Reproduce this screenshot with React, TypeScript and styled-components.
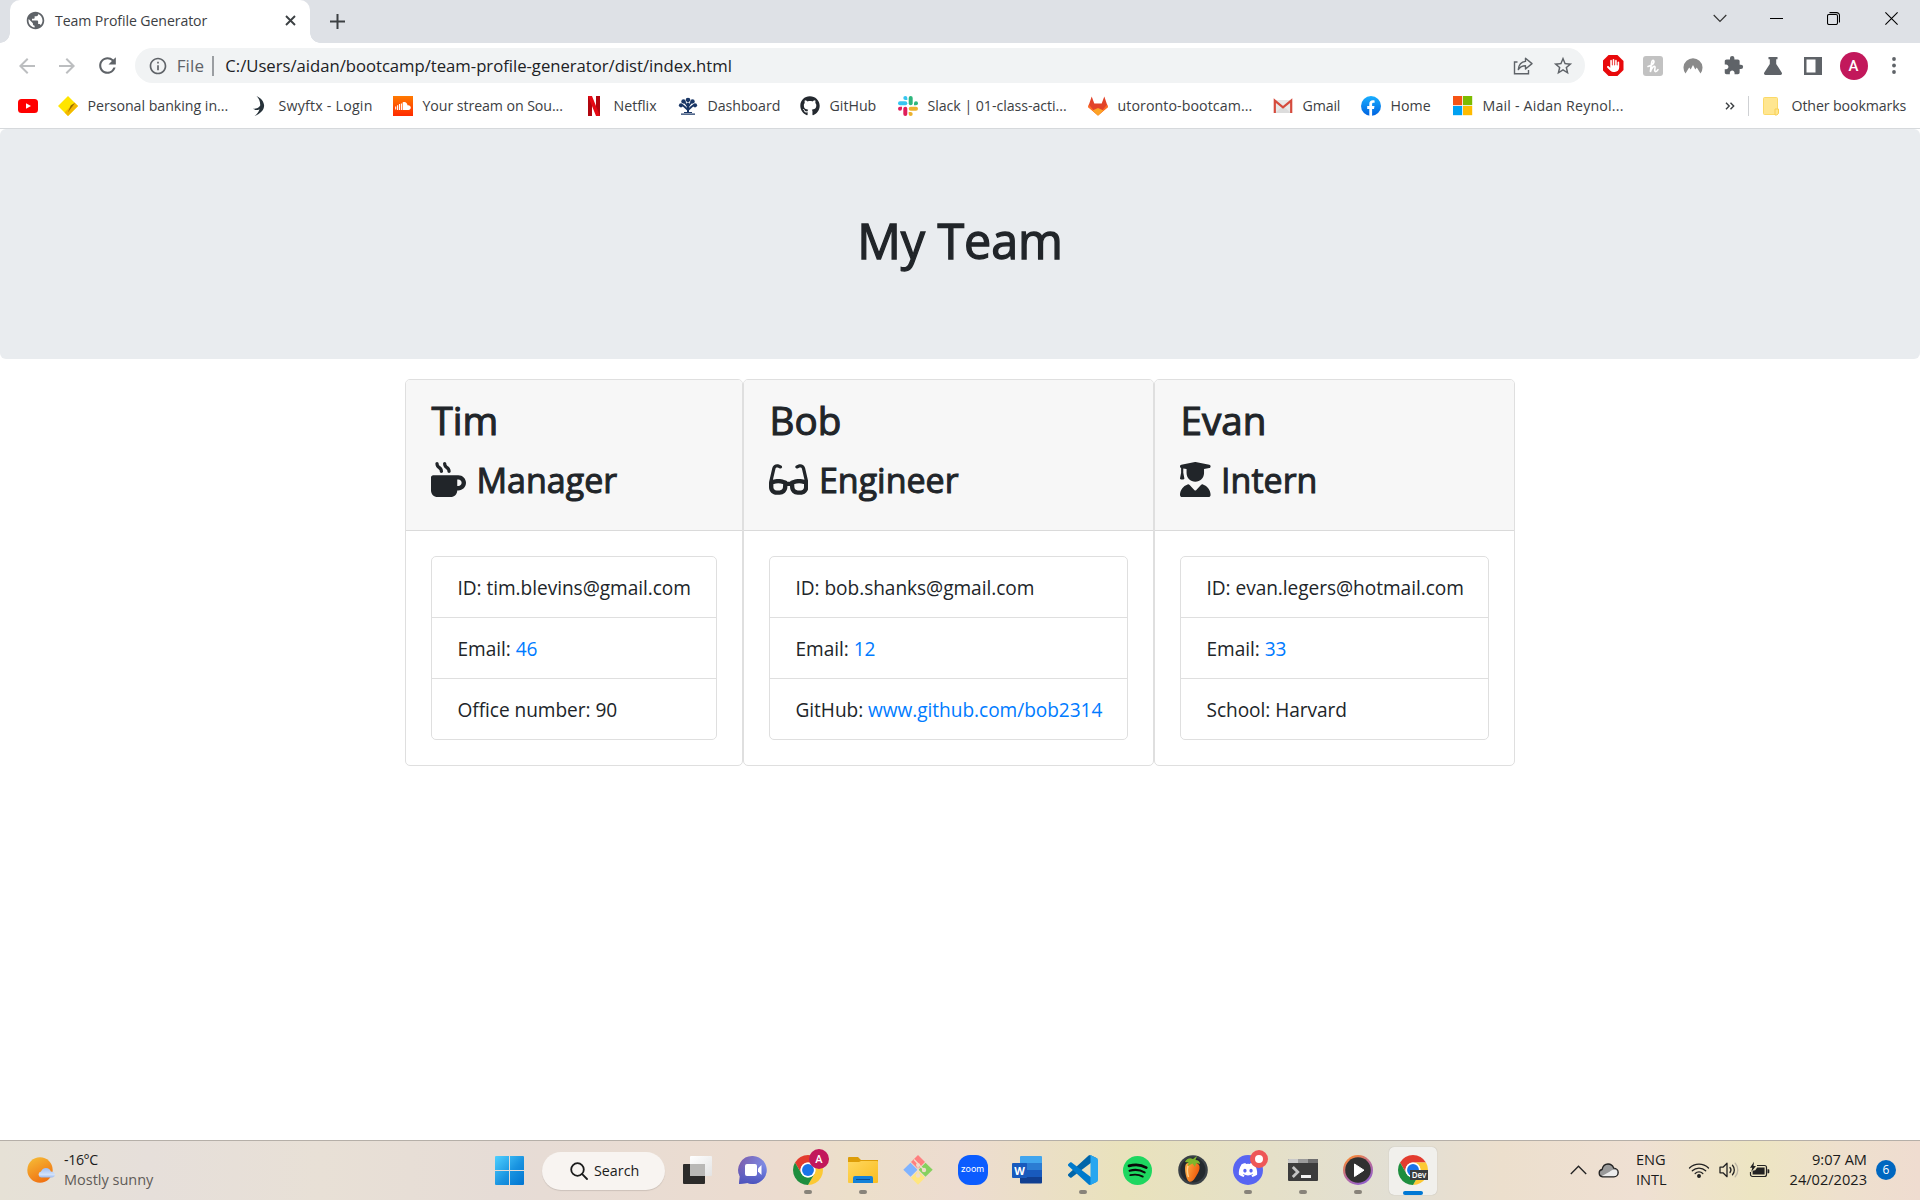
import React from "react";
import styled, { createGlobalStyle } from "styled-components";
import { MdPublic, MdArrowBack, MdArrowForward, MdRefresh, MdInfoOutline, MdStarBorder, MdExtension } from "react-icons/md";
import { FaMugHot, FaGlasses, FaUserGraduate, FaGithub, FaDiscord, FaHand } from "react-icons/fa6";

const FONT = `"Open Sans", "Noto Sans", sans-serif`;
const UI_INK = "#3c4043";

const GlobalStyle = createGlobalStyle`
  * { box-sizing: border-box; }
  body { margin: 0; background: #fff; font-family: ${FONT}; font-weight: 400; overflow: hidden; }
  h1, h2, h3, ul { margin: 0; padding: 0; }
  svg { display: block; flex: none; }
`;

const Screen = styled.div`
  width: 1920px;
  height: 1200px;
  display: flex;
  flex-direction: column;
`;

/* ---------- Shared ---------- */

const Label = styled.span<{ $size?: number; $track?: number; $color?: string }>`
  font-size: ${(p) => p.$size ?? 14.2}px;
  letter-spacing: ${(p) => p.$track ?? 0}px;
  color: ${(p) => p.$color ?? UI_INK};
  white-space: pre;
  line-height: 20px;
`;

const IconCell = styled.span<{ $w: number; $color?: string }>`
  width: ${(p) => p.$w}px;
  flex: none;
  display: flex;
  align-items: center;
  justify-content: center;
  color: ${(p) => p.$color ?? "#5f6368"};
`;

/* ---------- Tab strip ---------- */

const TabStrip = styled.header`
  height: 43px;
  flex: none;
  display: flex;
  background: #dee1e6;
  padding-left: 10px;
`;

const Tab = styled.div`
  position: relative;
  width: 300px;
  height: 43px;
  display: flex;
  align-items: center;
  padding: 0 12px 2px 15px;
  background: #fff;
  border-radius: 10px 10px 0 0;
  &::before,
  &::after {
    content: "";
    position: absolute;
    bottom: 0;
    width: 10px;
    height: 10px;
  }
  &::before {
    left: -10px;
    background: radial-gradient(circle at 0 0, #dee1e6 9.5px, #fff 10px);
  }
  &::after {
    right: -10px;
    background: radial-gradient(circle at 100% 0, #dee1e6 9.5px, #fff 10px);
  }
`;

const TabTitle = styled(Label)`
  flex: 1;
  padding-left: 10px;
`;

const NewTab = styled.div`
  width: 36px;
  margin-left: 9px;
  height: 43px;
  display: flex;
  align-items: center;
  justify-content: center;
`;

const WindowControls = styled.div`
  margin-left: auto;
  height: 37px;
  display: flex;
`;

/* ---------- Toolbar ---------- */

const Toolbar = styled.div`
  height: 45px;
  flex: none;
  display: flex;
  align-items: center;
  padding: 0 7px;
`;

const Omnibox = styled.div`
  width: 1450px;
  height: 35px;
  margin-left: 8px;
  display: flex;
  align-items: center;
  border-radius: 18px;
  background: #f1f3f4;
  padding: 0 3px 0 8px;
`;

const SchemeDivider = styled.span`
  width: 2px;
  height: 20px;
  margin: 0 11px 0 8px;
  background: #9b9ea2;
`;

const OmniboxActions = styled.div`
  margin-left: auto;
  display: flex;
`;

const Extensions = styled.div`
  display: flex;
  align-items: center;
  margin-left: 8px;
`;

const Blocker = styled.span`
  width: 21px;
  height: 21px;
  display: grid;
  place-items: center;
  background: #e8090b;
  color: #fff;
  clip-path: polygon(29% 0, 71% 0, 100% 29%, 100% 71%, 71% 100%, 29% 100%, 0 71%, 0 29%);
`;

const Honey = styled.span`
  width: 20px;
  height: 20px;
  border-radius: 3px;
  background: #c2c2c2;
  display: grid;
  place-items: center;
`;

const Avatar = styled.span<{ $d: number; $f: number }>`
  width: ${(p) => p.$d}px;
  height: ${(p) => p.$d}px;
  border-radius: 50%;
  background: #c2185b;
  color: #fff;
  display: grid;
  place-items: center;
  font: 500 ${(p) => p.$f}px Roboto, sans-serif;
`;

/* ---------- Bookmarks ---------- */

const BookmarkBar = styled.nav`
  height: 41px;
  flex: none;
  display: flex;
  align-items: center;
  padding: 0 0 4px 18px;
  border-bottom: 1px solid #d6d9dc;
`;

const BookmarkItem = styled.div<{ $w: number }>`
  width: ${(p) => p.$w}px;
  flex: none;
  display: flex;
  align-items: center;
  gap: 9.5px;
`;

const OtherBookmarks = styled.div`
  margin-left: auto;
  width: 195px;
  display: flex;
  align-items: center;
`;

const OtherLabel = styled(Label)`
  margin-left: 10.5px;
`;

const BarDivider = styled.span`
  width: 1px;
  height: 20px;
  margin: 0 12px 0 13px;
  background: #cfd1d4;
`;

/* ---------- Page ---------- */

const Page = styled.main`
  flex: 1;
  display: flex;
  flex-direction: column;
  align-items: center;
  color: #212529;
`;

const Jumbotron = styled.section`
  width: 100%;
  height: 230px;
  padding-top: 81px;
  background: #e9ecef;
  border-radius: 6px;
  text-align: center;
`;

const PageTitle = styled.h1`
  font-size: 48.5px;
  font-weight: 400;
  line-height: 60px;
  letter-spacing: -0.1px;
  -webkit-text-stroke: 1.3px currentColor;
`;

const Team = styled.section`
  display: flex;
  margin-top: 20px;
`;

const Card = styled.article<{ $w: number }>`
  width: ${(p) => p.$w}px;
  height: 387px;
  border: 1px solid #dfdfdf;
  border-radius: 5px;
  overflow: hidden;
`;

const CardHeader = styled.div`
  height: 151px;
  padding: 16px 25px 14px;
  background: #f7f7f7;
  border-bottom: 1px solid #dadada;
`;

const MemberName = styled.h2`
  font-size: 38.6px;
  font-weight: 400;
  line-height: 48px;
  margin-bottom: 10px;
  padding-left: 0.5px;
  -webkit-text-stroke: 1.1px currentColor;
`;

const MemberRole = styled.h3`
  display: flex;
  align-items: center;
  gap: 10.5px;
  height: 52px;
  font-size: 34px;
  font-weight: 400;
  line-height: 42px;
`;

const RoleName = styled.span`
  -webkit-text-stroke: 1px currentColor;
`;

const RoleIcon = styled.span<{ $w: number }>`
  width: ${(p) => p.$w}px;
  padding-bottom: 1px;
  svg {
    width: ${(p) => p.$w}px;
    height: 35px;
  }
`;

const CardBody = styled.div`
  padding: 25px;
`;

const DetailList = styled.ul`
  list-style: none;
  border: 1px solid #dfdfdf;
  border-radius: 5px;
`;

const Detail = styled.li`
  height: 61px;
  padding: 16px 0 0 25.5px;
  font-size: 19.1px;
  letter-spacing: -0.05px;
  line-height: 30px;
  white-space: nowrap;
  &:not(:last-child) {
    border-bottom: 1px solid #dfdfdf;
  }
  &:last-child {
    height: 60px;
  }
`;

const Link = styled.a`
  color: #007bff;
`;

/* ---------- Taskbar ---------- */

const Taskbar = styled.footer`
  height: 60px;
  flex: none;
  display: flex;
  align-items: center;
  border-top: 1px solid #b5afa8;
  background: linear-gradient(
    90deg,
    #e6e1d6 0, #e6dfda 150px, #e8e0d6 320px, #e6dcd6 500px, #ecdccf 780px, #ecdfca 850px,
    #eddcd0 960px, #e9e2bc 1125px, #e5e0c8 1270px, #e2dfd4 1400px, #ecdfcd 1500px,
    #efe0d3 1640px, #ede5c2 1755px, #eee0cd 1840px, #efdcd0 1920px
  );
`;

const Weather = styled.div`
  width: 482px;
  padding-left: 26px;
  display: flex;
  align-items: center;
  gap: 9px;
`;

const Stack = styled.div<{ $align?: string }>`
  display: flex;
  flex-direction: column;
  align-items: ${(p) => p.$align ?? "flex-start"};
  padding-bottom: 2px;
`;

const Slot = styled.div`
  position: relative;
  width: 55px;
  height: 59px;
  display: grid;
  place-items: center;
  padding-bottom: 1px;
`;

const ActiveSlot = styled(Slot)`
  width: 48px;
  height: 48px;
  margin-left: 4px;
  border-radius: 5px;
  background: #f1f0ec;
  box-shadow: 0 0 1px rgba(0, 0, 0, 0.25);
`;

const Indicator = styled.span<{ $active?: boolean }>`
  position: absolute;
  bottom: ${(p) => (p.$active ? 0 : 6)}px;
  width: ${(p) => (p.$active ? 20 : 8)}px;
  height: 4px;
  border-radius: 2px;
  background: ${(p) => (p.$active ? "#0078d4" : "#88837a")};
`;

const SearchPill = styled.div`
  width: 123px;
  height: 38px;
  margin: 0 5px;
  border-radius: 19px;
  background: #f8f4f1;
  box-shadow: 0 1px 1px rgba(0, 0, 0, 0.12);
  display: flex;
  align-items: center;
  gap: 6px;
  padding-left: 28px;
`;

const CornerBadge = styled.span<{ $top: number; $right: number }>`
  position: absolute;
  top: ${(p) => p.$top}px;
  right: ${(p) => p.$right}px;
`;

const ZoomBadge = styled.span`
  width: 30px;
  height: 30px;
  border-radius: 12px;
  background: #0b5cff;
  color: #fff;
  display: grid;
  place-items: center;
  padding-bottom: 3px;
  font: 400 9px Inter, sans-serif;
`;

const DevBadge = styled.span`
  position: absolute;
  left: 21px;
  top: 23px;
  width: 18px;
  height: 10px;
  background: #3a3c3e;
  color: #fff;
  font: 600 8px/10px "Open Sans", sans-serif;
  text-align: center;
`;

const WordMark = styled.span`
  position: absolute;
  left: 12px;
  top: 22px;
  width: 15px;
  height: 15px;
  border-radius: 1px;
  background: #185abd;
  color: #fff;
  font: 700 11px/15px "Open Sans", sans-serif;
  text-align: center;
`;

const DiscordDisc = styled.span`
  width: 30px;
  height: 30px;
  border-radius: 50%;
  background: #5865f2;
  color: #fff;
  display: grid;
  place-items: center;
`;

const Recording = styled.span`
  display: block;
  width: 18px;
  height: 18px;
  border-radius: 50%;
  border: 5px solid #ee5757;
  background: #fff;
`;

const Tray = styled.div`
  margin-left: auto;
  display: flex;
  align-items: center;
  padding: 0 24px 1px 0;
`;

const Language = styled(Stack)`
  width: 51px;
  padding-left: 1px;
`;

const Clock = styled(Stack)`
  width: 86px;
`;

const Count = styled.span`
  width: 20px;
  height: 20px;
  margin-left: 9px;
  border-radius: 50%;
  background: #0067c0;
  color: #fff;
  display: grid;
  place-items: center;
  font: 400 12px/20px ${FONT};
`;

/* ---------- Drawings ---------- */

const YouTube = () => (
  <svg width="20" height="20" viewBox="0 0 20 20">
    <rect y="3" width="20" height="14" rx="3.5" fill="#f00" />
    <path d="M8 7.2v5.6l5-2.8z" fill="#fff" />
  </svg>
);
const Bank = () => (
  <svg width="20" height="20" viewBox="0 0 20 20">
    <path d="M10 0 20 10 10 20 0 10z" fill="#ffe500" />
    <path d="M16.4 6.4 20 10 10 20 6.6 16.6z" fill="#f2b800" />
    <path d="M17 7 9.8 16.6l3-7.4z" fill="#7a5500" opacity=".75" />
  </svg>
);
const Swyftx = () => (
  <svg width="20" height="20" viewBox="0 0 20 20">
    <path d="M7.5 0c5 2.2 7.5 6 7.6 9.6C15.200 14 11 18 5.500 20c2.800-2.200 4.300-4.300 5-6.800-2.300 1.300-4.300 1.100-6.500-.4 3.300.2 5.600-.9 7.200-3.300C11.400 5.500 9.800 2.200 7.500 0z" fill="#27323a" />
  </svg>
);
const SoundCloud = () => (
  <svg width="20" height="20" viewBox="0 0 20 20">
    <defs>
      <linearGradient id="sc" x1="0" x2="0" y1="0" y2="1">
        <stop offset="0" stopColor="#ff7a00" />
        <stop offset="1" stopColor="#ff2a00" />
      </linearGradient>
    </defs>
    <rect width="20" height="20" fill="url(#sc)" />
    <path d="M2.700 10.500v3M4.600 9.200v4.700M6.500 8v6M8.400 7.500v6.500" stroke="#fff" strokeWidth="1.100" />
    <path d="M9.600 6.500c2.600-1.200 4.700.4 4.900 2.800 1.700-.5 3.300.7 3.300 2.300 0 1.300-1 2.400-2.300 2.400H9.600z" fill="#fff" />
  </svg>
);
const Netflix = () => (
  <svg width="20" height="20" viewBox="0 0 20 20">
    <path d="M4 0h4v20H4zM12 0h4v20h-4z" fill="#b1060f" />
    <path d="M4 0h4l8 20h-4z" fill="#e50914" />
  </svg>
);
const UniversityTree = () => (
  <svg width="20" height="20" viewBox="0 0 20 20">
    <g fill="#1a3766">
      <circle cx="10" cy="4.200" r="2.400" />
      <circle cx="5.500" cy="5.500" r="2.200" />
      <circle cx="14.500" cy="5.500" r="2.200" />
      <circle cx="3" cy="9.300" r="2.100" />
      <circle cx="17" cy="9.300" r="2.100" />
      <path d="M9 6h2v11H9zM3 17.500h14v1.300H3zM6 16h8v1H6z" />
    </g>
    <path d="M4 8.500l5.500 5M16 8.500l-5.500 5M6.500 6l3.500 5 3.500-5" stroke="#1a3766" strokeWidth="1.800" fill="none" />
    <path d="M7.500 4.500 10 7l2.500-2.500M4 7.300l4 2.400M16 7.300l-4 2.400" stroke="#fff" strokeWidth=".6" fill="none" />
  </svg>
);
const Slack = () => (
  <svg width="20" height="20" viewBox="0 0 20 20">
    <g fill="#36c5f0"><rect x="0" y="5.300" width="9.300" height="4" rx="2" /><path d="M7.300 0a2 2 0 0 1 2 2v2h-2a2 2 0 0 1 0-4z" /></g>
    <g fill="#2eb67d"><rect x="10.700" y="0" width="4" height="9.300" rx="2" /><path d="M20 7.300a2 2 0 0 1-2 2h-2v-2a2 2 0 0 1 4 0z" /></g>
    <g fill="#ecb22e"><rect x="10.700" y="10.700" width="9.300" height="4" rx="2" /><path d="M12.700 20a2 2 0 0 1-2-2v-2h2a2 2 0 0 1 0 4z" /></g>
    <g fill="#e01e5a"><rect x="5.300" y="10.700" width="4" height="9.300" rx="2" /><path d="M0 12.700a2 2 0 0 1 2-2h2v2a2 2 0 0 1-4 0z" /></g>
  </svg>
);
const GitLab = () => (
  <svg width="20" height="20" viewBox="0 0 20 20">
    <path d="M3.700.5 6.300 7.500h7.400L16.300.5l3.500 10.300L10 19.500.2 10.800z" fill="#e24329" />
    <path d="M.8 8.500 10 19.500l9.200-11 .8 2.800L10 19.500 0 11.300z" fill="#fc6d26" />
    <path d="M4.500 14.500 10 12l5.500 2.500L10 19.800z" fill="#fca326" />
  </svg>
);
const Gmail = () => (
  <svg width="20" height="20" viewBox="0 0 20 20">
    <path d="M1.500 4h17v13h-17z" fill="#e9e9e9" />
    <path d="M2 17l8-7 8 7z" fill="#dcdcdc" />
    <path d="M1.800 17V4.600L10 11.300l8.200-6.700V17" fill="none" stroke="#d54b3d" strokeWidth="2.200" />
  </svg>
);
const Facebook = () => (
  <svg width="20" height="20" viewBox="0 0 20 20">
    <defs>
      <linearGradient id="fb" x1="0" x2="0" y1="0" y2="1">
        <stop offset="0" stopColor="#19afff" />
        <stop offset="1" stopColor="#0062e0" />
      </linearGradient>
    </defs>
    <circle cx="10" cy="10" r="10" fill="url(#fb)" />
    <path d="M8.300 19.900v-7H6.200V10h2.100V7.900c0-2.300 1.400-3.600 3.400-3.600.9 0 1.900.2 1.900.2v2.300h-1.100c-1.100 0-1.400.6-1.400 1.300V10h2.400l-.5 2.900h-1.900v7z" fill="#fff" />
  </svg>
);
const Microsoft = () => (
  <svg width="20" height="20" viewBox="0 0 20 20">
    <path d="M0 0h9.200v9.200H0z" fill="#f65314" />
    <path d="M10 0h9.200v9.200H10z" fill="#7cbb00" />
    <path d="M0 10h9.200v9.200H0z" fill="#00a1f1" />
    <path d="M10 10h9.200v9.200H10z" fill="#ffbb00" />
  </svg>
);
const Folder = () => (
  <svg width="18" height="20" viewBox="0 0 18 20">
    <path d="M2.500 1.500h12a1 1 0 0 1 1 1v16h-13a1 1 0 0 1-1-1v-15a1 1 0 0 1 1-1z" fill="#ffe690" stroke="#fbd968" />
    <path d="M13 13h3.500v4.500l-2 1.500H13z" fill="#ffe690" stroke="#f7cf55" />
  </svg>
);
const Share = () => (
  <svg width="20" height="20" viewBox="0 0 20 20" fill="none" stroke="#5f6368" strokeWidth="1.400">
    <path d="M4.500 6H1.500v11.800h14V14" />
    <path d="M12.500 2.200 19 7.600l-6.500 5.400V9.800C9 9.800 7 11 5.300 13.600 5.700 9.300 8.200 5.900 12.500 5.400z" strokeLinejoin="round" />
  </svg>
);
const NordMark = () => (
  <svg width="20" height="20" viewBox="0 0 20 20">
    <path d="M2.500 17.500A9.500 9.500 0 1 1 17.500 17.500l-3.700-6-1.500 2L10 9l-2.300 4.500-1.500-2z" fill="#8a8a8a" />
  </svg>
);
const Flask = () => (
  <svg width="18" height="18" viewBox="0 0 18 18">
    <path d="M4.500 0h9v2.200h-1.300V7l5.500 8.500c.7 1.200.1 2.500-1.200 2.500h-15C.2 18-.4 16.700.3 15.500L5.800 7V2.200H4.500z" fill="#5f6368" />
  </svg>
);
const SidePanel = () => (
  <svg width="18" height="18" viewBox="0 0 18 18">
    <path d="M0 0h18v18H0zM2.500 2.500v13h9v-13z" fill="#5f6368" fillRule="evenodd" />
  </svg>
);
const Dots = () => (
  <svg width="4" height="17" viewBox="0 0 4 17" fill="#5f6368">
    <circle cx="2" cy="2" r="1.900" /><circle cx="2" cy="8.500" r="1.900" /><circle cx="2" cy="15" r="1.900" />
  </svg>
);
const HoneyMark = () => (
  <svg width="14" height="16" viewBox="0 0 14 16" fill="none" stroke="#fff" strokeWidth="1.600" strokeLinecap="round">
    <path d="M2 8.500C6.500 7.500 9 4.500 7.500 2.500 5.500 1.200 5.300 7 4.300 14 5.500 9.500 8.500 7 9 9c.3 1.500-1.200 4.500.5 4.600 1.300 0 2-1.100 2.500-2" />
  </svg>
);

const SunCloud = () => (
  <svg width="29" height="28" viewBox="0 0 29 28">
    <defs>
      <linearGradient id="sun" x1=".2" x2=".7" y1="0" y2="1">
        <stop offset="0" stopColor="#f5b935" /><stop offset="1" stopColor="#f06e10" />
      </linearGradient>
      <linearGradient id="cl" x1="0" x2="0" y1="0" y2="1">
        <stop offset="0" stopColor="#9fbdf3" /><stop offset=".7" stopColor="#d3e2fa" /><stop offset="1" stopColor="#9ab8ee" />
      </linearGradient>
    </defs>
    <circle cx="14" cy="13" r="12.700" fill="url(#sun)" />
    <path d="M15 20.500a3 3 0 0 1 0-5.900c.8-2.300 2.500-3.700 5-3.700 2.600 0 4.200 1.500 4.800 3.500 2.500.2 4.200 1.300 4.200 3.100 0 1.900-1.500 3-3.400 3z" fill="url(#cl)" />
  </svg>
);
const WindowsLogo = () => (
  <svg width="29" height="29" viewBox="0 0 29 29">
    <defs>
      <linearGradient id="win" gradientUnits="userSpaceOnUse" x1="0" y1="0" x2="29" y2="29">
        <stop offset="0" stopColor="#4fd0ff" /><stop offset=".55" stopColor="#1993e0" /><stop offset="1" stopColor="#0074d1" />
      </linearGradient>
    </defs>
    <path d="M1 0h13v14H0V1a1 1 0 0 1 1-1zM15 0h13a1 1 0 0 1 1 1v13H15zM0 15h14v14H1a1 1 0 0 1-1-1zM15 15h14v13a1 1 0 0 1-1 1H15z" fill="url(#win)" />
  </svg>
);
const SearchGlass = () => (
  <svg width="18" height="18" viewBox="0 0 18 18" fill="none" stroke="#1b1b1b" strokeWidth="1.800" strokeLinecap="round">
    <circle cx="7.500" cy="7.500" r="6.300" /><path d="M12.200 12.200 17 17" />
  </svg>
);
const TaskView = () => (
  <svg width="31" height="28" viewBox="0 0 31 28">
    <defs>
      <linearGradient id="tv" x1="0" x2="1" y1="0" y2="1">
        <stop offset="0" stopColor="#fff" /><stop offset="1" stopColor="#e3e3e3" />
      </linearGradient>
    </defs>
    <rect x="1" y="8" width="22" height="20" rx="1" fill="#2c2b2a" />
    <rect x="8" y="0" width="22" height="20" rx="1" fill="url(#tv)" />
    <path d="M8 8h15v12H8z" fill="#b9b8b6" />
  </svg>
);
const Chat = () => (
  <svg width="30" height="30" viewBox="0 0 30 30">
    <defs>
      <linearGradient id="chat" x1="0" x2="1" y1="0" y2=".3">
        <stop offset="0" stopColor="#7b5aa9" /><stop offset="1" stopColor="#7d8ee8" />
      </linearGradient>
      <linearGradient id="chat2" x1="0" x2="0" y1="0" y2="1">
        <stop offset=".3" stopColor="#5059c9" stopOpacity="0" /><stop offset="1" stopColor="#4b53bc" />
      </linearGradient>
    </defs>
    <path d="M15 1a14 14 0 1 1-5.500 27L1 29l.8-7.500A14 14 0 0 1 15 1z" fill="url(#chat)" />
    <path d="M15 1a14 14 0 1 1-5.500 27L1 29l.8-7.500A14 14 0 0 1 15 1z" fill="url(#chat2)" />
    <rect x="7" y="9" width="12" height="12" rx="2" fill="#fff" />
    <path d="M20 13.500 23.500 10v10L20 16.500z" fill="#fff" />
  </svg>
);
const Chrome = () => (
  <svg width="30" height="30" viewBox="0 0 48 48">
    <path d="M24 12H44.780A24 24 0 0 0 3.220 12L13.600 30A12 12 0 0 1 24 12Z" fill="#e33b2e" />
    <path d="M34.400 30 24 48A24 24 0 0 0 44.780 12H24A12 12 0 0 1 34.400 30Z" fill="#fcc934" />
    <path d="M13.600 30 3.220 12A24 24 0 0 0 24 48L34.400 30A12 12 0 0 1 13.600 30Z" fill="#1e8e3e" />
    <circle cx="24" cy="24" r="12" fill="#fff" />
    <circle cx="24" cy="24" r="9.500" fill="#1a73e8" />
  </svg>
);
const Explorer = () => (
  <svg width="30" height="27" viewBox="0 0 30 27">
    <defs>
      <linearGradient id="ex" x1="0" x2="1" y1="0" y2="1">
        <stop offset="0" stopColor="#ffd75e" /><stop offset="1" stopColor="#f9bd20" />
      </linearGradient>
    </defs>
    <path d="M0 1a1 1 0 0 1 1-1h9l3 3h17v4H0z" fill="#dd9d08" />
    <path d="M0 5h11l2-1h16a1 1 0 0 1 1 1v20a1 1 0 0 1-1 1H1a1 1 0 0 1-1-1z" fill="url(#ex)" />
    <path d="M5 26v-5a2 2 0 0 1 2-2h16a2 2 0 0 1 2 2v5z" fill="#1481d8" />
    <path d="M8 22.500h14" stroke="#0a4f94" />
  </svg>
);
const GitBash = () => (
  <svg width="30" height="30" viewBox="0 0 30 30">
    <path d="M15 0l7 7-7 7-7-7z" fill="#ff8080" />
    <path d="M7.500 7.800l7 7-7 7-7.200-7z" fill="#80b3ff" />
    <path d="M22.500 7.800l7.200 7-7.200 7-7-7z" fill="#85d15e" />
    <path d="M15 15.800l7 7-7 7-7-7z" fill="#ffe680" />
    <path d="M11 4.500l9.500 10M15 10v11" stroke="#eeddcb" strokeWidth="1.400" />
    <g fill="#eeddcb"><circle cx="15" cy="10" r="2" /><circle cx="21" cy="15" r="2.200" /><circle cx="15" cy="20.500" r="2.200" /></g>
  </svg>
);
const WordPages = () => (
  <svg width="30" height="28" viewBox="0 0 30 28">
    <path d="M7 1a1 1 0 0 1 1-1h20a1 1 0 0 1 1 1v6H7z" fill="#41a5ee" />
    <path d="M7 7h22v7H7z" fill="#2b7cd3" /><path d="M7 14h22v7H7z" fill="#185abd" />
    <path d="M7 21h22v5.500a1 1 0 0 1-1 1H8a1 1 0 0 1-1-1z" fill="#103f91" />
  </svg>
);
const VsCode = () => (
  <svg width="30" height="30" viewBox="0 0 100 100">
    <path d="M96.461 10.796 75.857.876C73.472-.273 70.622.212 68.750 2.083L1.299 63.583C-.516 65.237-.514 68.094 1.303 69.745L6.813 74.754C8.298 76.104 10.535 76.204 12.134 74.991L93.361 13.370C96.086 11.303 100 13.246 100 16.667V16.428C100 14.027 98.625 11.838 96.461 10.796Z" fill="#0065a9" />
    <path d="M96.461 89.204 75.857 99.125C73.472 100.273 70.622 99.788 68.750 97.917L1.299 36.417C-.516 34.763-.514 31.906 1.303 30.255L6.813 25.246C8.298 23.896 10.535 23.796 12.134 25.010L93.361 86.630C96.086 88.697 100 86.754 100 83.333V83.573C100 85.974 98.625 88.162 96.461 89.204Z" fill="#007acc" />
    <path d="M75.858 99.126C73.472 100.274 70.622 99.789 68.750 97.917 71.056 100.223 75 98.590 75 95.328V4.672C75 1.410 71.056-.223 68.750 2.083 70.622.211 73.472-.274 75.858.874L96.459 10.781C98.623 11.822 100 14.011 100 16.413V83.587C100 85.989 98.623 88.179 96.459 89.220Z" fill="#27a6f0" />
  </svg>
);
const Spotify = () => (
  <svg width="29" height="29" viewBox="0 0 29 29">
    <circle cx="14.500" cy="14.500" r="14.500" fill="#1ed760" />
    <g fill="none" stroke="#0a0a0a" strokeLinecap="round">
      <path d="M6 9.900c6-1.700 12.500-1.100 17.300 1.700" strokeWidth="2.700" />
      <path d="M6.600 14.800c5.300-1.500 10.700-.9 15 1.600" strokeWidth="2.200" />
      <path d="M7.300 19.200c4.500-1.200 8.800-.7 12.500 1.400" strokeWidth="1.800" />
    </g>
  </svg>
);
const FruitStudio = () => (
  <svg width="30" height="30" viewBox="0 0 30 30">
    <defs>
      <linearGradient id="fl" x1="0" x2="1" y1="0" y2=".4">
        <stop offset="0" stopColor="#ffb347" /><stop offset="1" stopColor="#ee5a0c" />
      </linearGradient>
    </defs>
    <circle cx="15" cy="15" r="14.800" fill="#3a4046" />
    <circle cx="15" cy="15" r="12.500" fill="#24292e" />
    <path d="M8 9c3-2 11-2 13 1 2 4-1.500 9-4 13-2 4-6 5-7.500 2C7.500 21 6 12 8 9z" fill="url(#fl)" />
    <path d="M10 11c-1 3-.5 8 .5 11" stroke="#ffe0a0" strokeWidth="1.500" fill="none" opacity=".8" />
    <path d="M7 7c1-3 5-5 8-3l4-3-1.500 4c3 0 4.500 2 4.500 4-2-1-3-1-4-.5L17 12l-2.500-3.500L10 11l.5-3.500z" fill="#7fb62c" />
  </svg>
);
const Terminal = () => (
  <svg width="30" height="22" viewBox="0 0 30 22">
    <rect width="30" height="22" rx="1" fill="#3c3c3c" />
    <path d="M1 0h9v4H0V1a1 1 0 0 1 1-1z" fill="#c9c9c9" /><path d="M10 0h10v4H10z" fill="#9b9b9b" /><path d="M20 0h9a1 1 0 0 1 1 1v3H20z" fill="#6f6f6f" />
    <path d="M4.800 8l5 5-5 5" fill="none" stroke="#c4c4c4" strokeWidth="2.800" />
    <path d="M13 16h10v3H13z" fill="#f2f2f2" />
  </svg>
);
const MediaPlayer = () => (
  <svg width="30" height="30" viewBox="0 0 30 30">
    <defs>
      <linearGradient id="mp" x1=".2" x2=".8" y1="0" y2="1">
        <stop offset="0" stopColor="#ff8a2a" /><stop offset=".5" stopColor="#b96a9c" /><stop offset="1" stopColor="#8d5fd3" />
      </linearGradient>
    </defs>
    <circle cx="15" cy="15" r="15" fill="url(#mp)" />
    <circle cx="15" cy="15" r="12.800" fill="#303030" />
    <path d="M11.500 9v12.500L21 15.200z" fill="#fff" stroke="#fff" strokeLinejoin="round" />
  </svg>
);
const TrayChevron = () => (
  <svg width="17" height="10" viewBox="0 0 17 10"><path d="M.8 9 8.500 1.200 16.200 9" fill="none" stroke="#222" strokeWidth="1.300" /></svg>
);
const TrayCloud = () => (
  <svg width="21" height="15" viewBox="0 0 21 15">
    <path d="M4.500 13.800a3.700 3.700 0 0 1-.4-7.300C4.800 3 7.200 1 10 1c2.700 0 4.800 1.600 5.700 4.200 2.600.1 4.500 2 4.500 4.300 0 2.500-1.900 4.300-4.300 4.300z" fill="#9a9a9a" />
    <path d="M3.500 13.200 12 8.500c2-2 5-2.500 7.500-.5v4l-3 1.800h-12z" fill="#ececec" />
    <path d="M4.500 13.800a3.700 3.700 0 0 1-.4-7.300C4.800 3 7.200 1 10 1c2.700 0 4.800 1.600 5.700 4.200 2.600.1 4.500 2 4.500 4.300 0 2.500-1.900 4.300-4.300 4.300z" fill="none" stroke="#222" strokeWidth="1.300" />
  </svg>
);
const Wifi = () => (
  <svg width="22" height="16" viewBox="0 0 22 16" fill="none" stroke="#222" strokeWidth="1.300" strokeLinecap="round">
    <path d="M1.500 6a13.500 13.500 0 0 1 19 0M4.300 8.800a9.500 9.500 0 0 1 13.400 0M7.200 11.500a5.400 5.400 0 0 1 7.600 0" />
    <circle cx="11" cy="14" r="1.300" fill="#222" />
  </svg>
);
const Volume = () => (
  <svg width="21" height="18" viewBox="0 0 21 18" fill="none" stroke="#222" strokeWidth="1.300" strokeLinecap="round" strokeLinejoin="round">
    <path d="M1 6.200h3L8 2.300v13.400l-4-3.900H1z" /><path d="M11 6.500a4 4 0 0 1 0 5M13.500 4.300a7 7 0 0 1 0 9.400" />
    <path d="M16.200 2.300a10 10 0 0 1 0 13.400" stroke="#bdb6a6" />
  </svg>
);
const Battery = () => (
  <svg width="21" height="18" viewBox="0 0 21 18">
    <path d="M8 4.500h7.500a2 2 0 0 1 2 2v7a2 2 0 0 1-2 2h-12a2 2 0 0 1-2-2V11" fill="none" stroke="#222" strokeWidth="1.200" />
    <path d="M8.200 6.600h7.400v6.800H3.600v-3.600l2.600-.5z" fill="#222" />
    <path d="M18.500 8.300h1a.8.800 0 0 1 .8.800v2.400a.8.800 0 0 1-.8.800h-1z" fill="#222" />
    <path d="M5 .8 1 6.800h2.300L2.200 11 7 5H4.500z" fill="#222" />
  </svg>
);

/* ---------- Data ---------- */

const bookmarks: { icon: React.ReactNode; label?: string; w: number; track?: number }[] = [
  { icon: <YouTube />, w: 40 },
  { icon: <Bank />, label: "Personal banking in...", w: 191, track: -0.03 },
  { icon: <Swyftx />, label: "Swyftx - Login", w: 144, track: 0.22 },
  { icon: <SoundCloud />, label: "Your stream on Sou...", w: 191, track: -0.08 },
  { icon: <Netflix />, label: "Netflix", w: 94 },
  { icon: <UniversityTree />, label: "Dashboard", w: 122, track: -0.05 },
  { icon: <FaGithub size={20} color="#24292f" />, label: "GitHub", w: 98 },
  { icon: <Slack />, label: "Slack | 01-class-acti...", w: 190, track: -0.05 },
  { icon: <GitLab />, label: "utoronto-bootcam...", w: 185, track: 0.08 },
  { icon: <Gmail />, label: "Gmail", w: 88, track: -0.15 },
  { icon: <Facebook />, label: "Home", w: 92 },
  { icon: <Microsoft />, label: "Mail - Aidan Reynol...", w: 200, track: 0.18 },
];

const members = [
  { name: "Tim", role: "Manager", icon: <FaMugHot />, iconWidth: 35, width: 338, id: "tim.blevins@gmail.com", email: "46", label: "Office number", value: "90" },
  { name: "Bob", role: "Engineer", icon: <FaGlasses />, iconWidth: 39.4, width: 411, id: "bob.shanks@gmail.com", email: "12", label: "GitHub", value: "www.github.com/bob2314", link: true },
  { name: "Evan", role: "Intern", icon: <FaUserGraduate />, iconWidth: 30.6, width: 361, id: "evan.legers@hotmail.com", email: "33", label: "School", value: "Harvard" },
];

export default function App() {
  return (
    <Screen>
      <GlobalStyle />
      <TabStrip>
        <Tab>
          <IconCell $w={20}><MdPublic size={21} /></IconCell>
          <TabTitle $size={14.1} $track={-0.08}>Team Profile Generator</TabTitle>
          <IconCell $w={16}>
            <svg width="11" height="11" viewBox="0 0 11 11"><path d="M1 1l9 9M10 1l-9 9" stroke="#3c4043" strokeWidth="1.900" /></svg>
          </IconCell>
        </Tab>
        <NewTab>
          <svg width="15" height="15" viewBox="0 0 15 15"><path d="M7.500 0v15M0 7.500h15" stroke="#3c4043" strokeWidth="2" /></svg>
        </NewTab>
        <WindowControls>
          <IconCell $w={57}><svg width="14" height="9" viewBox="0 0 14 9"><path d="M.7 1 7 7.400 13.300 1" fill="none" stroke="#333" strokeWidth="1.200" /></svg></IconCell>
          <IconCell $w={57}><svg width="13" height="1" viewBox="0 0 13 1"><path d="M0 0h13v1H0z" fill="#000" /></svg></IconCell>
          <IconCell $w={57}>
            <svg width="13" height="13" viewBox="0 0 13 13" fill="none" stroke="#000" strokeWidth="1.100"><rect x=".5" y="2.500" width="10" height="10" rx="1.500" /><path d="M2.500 .6h7a3 3 0 0 1 3 3v7" /></svg>
          </IconCell>
          <IconCell $w={58}><svg width="13" height="13" viewBox="0 0 13 13"><path d="M.4.400l12.200 12.200M12.600.400.4 12.600" stroke="#000" strokeWidth="1.100" /></svg></IconCell>
        </WindowControls>
      </TabStrip>

      <Toolbar>
        <IconCell $w={40} $color="#bcbec0"><MdArrowBack size={24} /></IconCell>
        <IconCell $w={40} $color="#bcbec0"><MdArrowForward size={24} /></IconCell>
        <IconCell $w={40}><MdRefresh size={25} /></IconCell>
        <Omnibox>
          <IconCell $w={29}><MdInfoOutline size={20} /></IconCell>
          <Label $size={17} $track={0.2} $color="#5f6368">{" "}File</Label>
          <SchemeDivider />
          <Label $size={16.7} $track={-0.02} $color="#202124">C:/Users/aidan/bootcamp/team-profile-generator/dist/index.html</Label>
          <OmniboxActions>
            <IconCell $w={40}><Share /></IconCell>
            <IconCell $w={39}><MdStarBorder size={22} /></IconCell>
          </OmniboxActions>
        </Omnibox>
        <Extensions>
          <IconCell $w={40}><Blocker><FaHand size={13} /></Blocker></IconCell>
          <IconCell $w={40}><Honey><HoneyMark /></Honey></IconCell>
          <IconCell $w={40}><NordMark /></IconCell>
          <IconCell $w={40}><MdExtension size={21} /></IconCell>
          <IconCell $w={40}><Flask /></IconCell>
          <IconCell $w={40}><SidePanel /></IconCell>
          <IconCell $w={41}><Avatar $d={28} $f={15}>A</Avatar></IconCell>
          <IconCell $w={39}><Dots /></IconCell>
        </Extensions>
      </Toolbar>

      <BookmarkBar>
        {bookmarks.map((b, i) => (
          <BookmarkItem key={i} $w={b.w}>
            {b.icon}
            {b.label && <Label $track={b.track}>{b.label}</Label>}
          </BookmarkItem>
        ))}
        <OtherBookmarks>
          <svg width="10" height="8" viewBox="0 0 10 8"><path d="M1 .7 4.200 4 1 7.300M5.500.7 8.700 4 5.500 7.300" fill="none" stroke="#3c4043" strokeWidth="1.400" /></svg>
          <BarDivider />
          <IconCell $w={20}><Folder /></IconCell>
          <OtherLabel $track={-0.12}>Other bookmarks</OtherLabel>
        </OtherBookmarks>
      </BookmarkBar>

      <Page>
        <Jumbotron><PageTitle>My Team</PageTitle></Jumbotron>
        <Team>
          {members.map((m) => (
            <Card key={m.name} $w={m.width}>
              <CardHeader>
                <MemberName>{m.name}</MemberName>
                <MemberRole>
                  <RoleIcon $w={m.iconWidth}>{m.icon}</RoleIcon>
                  <RoleName>{m.role}</RoleName>
                </MemberRole>
              </CardHeader>
              <CardBody>
                <DetailList>
                  <Detail>ID: {m.id}</Detail>
                  <Detail>Email: <Link>{m.email}</Link></Detail>
                  <Detail>{m.label}: {m.link ? <Link>{m.value}</Link> : m.value}</Detail>
                </DetailList>
              </CardBody>
            </Card>
          ))}
        </Team>
      </Page>

      <Taskbar>
        <Weather>
          <SunCloud />
          <Stack>
            <Label $size={14.2} $track={-0.4} $color="#1b1b1b">-16°C</Label>
            <Label $size={14.5} $color="#5f5b57">Mostly sunny</Label>
          </Stack>
        </Weather>
        <Slot><WindowsLogo /></Slot>
        <SearchPill><SearchGlass /><Label $size={14.3} $color="#1b1b1b">Search</Label></SearchPill>
        <Slot><TaskView /></Slot>
        <Slot><Chat /></Slot>
        <Slot><Chrome /><CornerBadge $top={8} $right={6}><Avatar $d={20} $f={11}>A</Avatar></CornerBadge><Indicator /></Slot>
        <Slot><Explorer /><Indicator /></Slot>
        <Slot><GitBash /></Slot>
        <Slot><ZoomBadge>zoom</ZoomBadge></Slot>
        <Slot><WordPages /><WordMark>W</WordMark></Slot>
        <Slot><VsCode /><Indicator /></Slot>
        <Slot><Spotify /></Slot>
        <Slot><FruitStudio /></Slot>
        <Slot><DiscordDisc><FaDiscord size={20} /></DiscordDisc><CornerBadge $top={9} $right={7}><Recording /></CornerBadge><Indicator /></Slot>
        <Slot><Terminal /><Indicator /></Slot>
        <Slot><MediaPlayer /><Indicator /></Slot>
        <ActiveSlot><Chrome /><DevBadge>Dev</DevBadge><Indicator $active /></ActiveSlot>
        <Tray>
          <IconCell $w={24}><TrayChevron /></IconCell>
          <IconCell $w={36}><TrayCloud /></IconCell>
          <IconCell $w={9} />
          <Language>
            <Label $size={14.6} $color="#1b1b1b">ENG</Label>
            <Label $size={14.6} $color="#1b1b1b">INTL</Label>
          </Language>
          <IconCell $w={25}><Wifi /></IconCell>
          <IconCell $w={36}><Volume /></IconCell>
          <IconCell $w={24}><Battery /></IconCell>
          <IconCell $w={10} />
          <Clock $align="flex-end">
            <Label $size={14.6} $color="#1b1b1b">9:07 AM</Label>
            <Label $size={14.6} $color="#1b1b1b">24/02/2023</Label>
          </Clock>
          <Count>6</Count>
        </Tray>
      </Taskbar>
    </Screen>
  );
}
